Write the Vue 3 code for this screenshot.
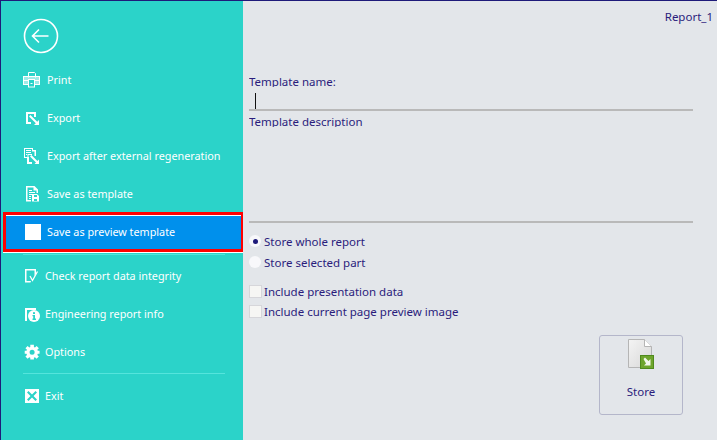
<script setup>
const topItems = [
  { label: 'Print', icon: 'print' },
  { label: 'Export', icon: 'export' },
  { label: 'Export after external regeneration', icon: 'regen' },
  { label: 'Save as template', icon: 'template' },
]
const lowerItems = [
  { label: 'Check report data integrity', icon: 'check' },
  { label: 'Engineering report info', icon: 'info' },
  { label: 'Options', icon: 'gear' },
]
</script>

<template>
  <div class="window">
    <aside class="sidebar">
      <div class="back-wrap">
        <svg class="back" width="36" height="36" viewBox="0 0 36 36" fill="none" stroke="#fff">
          <circle cx="18" cy="18" r="16.5" stroke-width="1.6" />
          <path d="M9.5 18H25.5M16 11.5L9.5 18L16 24.5" stroke-width="1.6" />
        </svg>
      </div>
      <ul class="menu">
        <li v-for="item in topItems" :key="item.label" class="item">
          <svg class="icon" width="18" height="18" viewBox="0 0 18 18">
            <g v-if="item.icon === 'print'" fill="none" stroke="#fff" stroke-width="1">
              <path d="M5.5 6.5V1.5H11.5L12.5 2.5V6.5" />
              <rect x="0.5" y="5.5" width="16" height="8" fill="#fff" fill-opacity="0.55" />
              <path d="M0.5 9.5H16.5" />
              <rect x="5.5" y="8.5" width="6" height="7.5" fill="#2bd3c9" />
              <path d="M7.5 12.5H9.5" />
            </g>
            <g v-else-if="item.icon === 'export'" fill="#fff">
              <path d="M3 3H13V8H11V5H5V13H8V15H3Z" />
              <path d="M6 7.4L7.4 6L14.2 12.8L16 11V16H11L12.8 14.2Z" />
            </g>
            <g v-else-if="item.icon === 'regen'" fill="#fff">
              <path fill-rule="evenodd" d="M1 1H10V3H13V9H11.5V4.5H9V8H5.5V11H1ZM2 2V10H4.5V7H9V2ZM3 3H8V4H3ZM3 5H8V6H3ZM3 7H4V8H3Z" />
              <path d="M4 10H6V15H9V17H4Z" />
              <path d="M7 9.4L8.4 8L14.4 14L16 12.5V17H11.5L13 15.4Z" />
            </g>
            <g v-else-if="item.icon === 'template'" fill="#fff">
              <path fill-rule="evenodd" d="M3 1H11.5L15 4.5V8H13.5V5.5H10.5V2.5H4.5V15H8V16.5H3ZM6 5H9V6H6ZM6 7H12V8H6ZM6 9H9V10H6ZM6 11H8V12H6ZM6 13H8V14H6Z" />
              <path fill-rule="evenodd" d="M9 9H14L16 11V16.5H9ZM11 10V12H14V10ZM11 14V16H14V14Z" />
            </g>
          </svg>
          <span class="label">{{ item.label }}</span>
        </li>
        <li class="item selected">
          <span class="white-square"></span>
          <span class="label">Save as preview template</span>
        </li>
      </ul>
      <div class="divider first"></div>
      <ul class="menu lower">
        <li v-for="item in lowerItems" :key="item.label" class="item">
          <svg class="icon" width="18" height="18" viewBox="0 0 18 18">
            <g v-if="item.icon === 'check'" fill="#fff">
              <path d="M2 2H13V7L11.5 9V3.5H3.5V14H8L7.5 15.5H2Z" />
              <path fill="none" stroke="#fff" stroke-width="1.3" d="M7 9L9.5 13.5L14.5 4.5" />
            </g>
            <g v-else-if="item.icon === 'info'">
              <path fill="#fff" d="M2 3H13V5H4V16H2Z" />
              <circle cx="11" cy="11" r="6" fill="#fff" />
              <rect x="10" y="7.2" width="2" height="1.8" fill="#2bd3c9" />
              <path fill="#2bd3c9" d="M9.5 10H12V13.5H13V15H9.5V13.5H10.2V11.3H9.5Z" />
            </g>
            <g v-else-if="item.icon === 'gear'">
              <path fill="#fff" fill-rule="evenodd" d="M7 1H11V3.4L12.2 3.9L14 2.3L16.5 4.7L14.8 6.4L15.3 7.5H17.3V11H15.3L14.8 12.2L16.5 14L14 16.4L12.2 14.8L11 15.3V17.3H7V15.3L5.9 14.8L4 16.4L1.6 14L3.3 12.2L2.8 11H0.8V7.5H2.8L3.3 6.4L1.6 4.7L4 2.3L5.9 3.9L7 3.4ZM9 6.4A2.8 2.8 0 1 0 9 12A2.8 2.8 0 1 0 9 6.4Z" transform="translate(1 0.9) scale(.9)" />
            </g>
          </svg>
          <span class="label">{{ item.label }}</span>
        </li>
      </ul>
      <div class="divider second"></div>
      <div class="item exit">
        <svg class="icon" width="18" height="18" viewBox="0 0 18 18">
          <path fill="#fff" fill-rule="evenodd" d="M2 2H16V16H2ZM5.5 4L4 5.5L7.5 9L4 12.5L5.5 14L9 10.5L12.5 14L14 12.5L10.5 9L14 5.5L12.5 4L9 7.5Z" />
        </svg>
        <span class="label">Exit</span>
      </div>
    </aside>

    <main class="content">
      <div class="report-name">Report_1</div>
      <div class="form">
        <label class="clipped name-label">Template name:</label>
        <div class="name-input"><span class="caret"></span></div>
        <label class="clipped desc-label">Template description</label>
        <div class="desc-input"></div>
        <div class="radios">
          <div class="option">
            <span class="radio checked"></span>
            <span>Store whole report</span>
          </div>
          <div class="option">
            <span class="radio"></span>
            <span>Store selected part</span>
          </div>
        </div>
        <div class="checks">
          <div class="option">
            <span class="checkbox"></span>
            <span>Include presentation data</span>
          </div>
          <div class="option">
            <span class="checkbox"></span>
            <span>Include current page preview image</span>
          </div>
        </div>
      </div>
      <div class="store-row">
        <button class="store" type="button">
          <svg width="32" height="34" viewBox="0 1 32 34">
            <defs>
              <linearGradient id="sheet" x1="0" y1="0" x2="1" y2="1">
                <stop offset="0" stop-color="#f4f4f4" />
                <stop offset="1" stop-color="#d8d8d8" />
              </linearGradient>
            </defs>
            <path d="M3.5 1.5H19.5L26.5 8.5V29.5H3.5Z" fill="url(#sheet)" stroke="#b5b5b5" />
            <path d="M19.5 1.5V8.5H26.5" fill="#fff" stroke="#b5b5b5" />
            <rect x="15.5" y="17.5" width="13" height="13" fill="#6ea52c" stroke="#4f8a1c" />
            <path d="M18.5 21L20 19.5L23.5 23L25.5 21V27.5H19L21 25.5Z" fill="#f2f7ea" />
          </svg>
          <span>Store</span>
        </button>
      </div>
    </main>
  </div>
</template>

<style>
html, body {
  margin: 0;
  padding: 0;
  background: #e3e6ea;
}
</style>

<style scoped>
.window {
  width: 717px;
  height: 440px;
  box-sizing: border-box;
  display: flex;
  border-top: 1px solid #1e1a7a;
  border-left: 1px solid #1e1a7a;
  font-family: "Noto Sans", "Open Sans", sans-serif;
  font-size: 11.5px;
  overflow: hidden;
}
.sidebar {
  width: 242px;
  flex: none;
  background: #2bd3c9;
  color: #fff;
  font-size: 10.8px;
  display: flex;
  flex-direction: column;
}
.back-wrap {
  height: 60px;
  padding: 17px 0 0 22px;
  box-sizing: border-box;
}
.back {
  display: block;
}
.menu {
  list-style: none;
  margin: 0;
  padding: 0;
}
.item {
  height: 38px;
  display: flex;
  align-items: center;
  padding-left: 22px;
  box-sizing: border-box;
}
.icon {
  flex: none;
  margin-right: 6px;
}
.label {
  white-space: nowrap;
  padding-bottom: 2px;
}
.selected {
  height: 40px;
  margin: -1px 0 0 2px;
  padding-left: 19px;
  background: #0090ec;
  border: 3px solid #ff0000;
  border-right-width: 2px;
  box-shadow: inset 0 1px 0 #fff, 0 1px 0 #fff;
}
.white-square {
  width: 16px;
  height: 16px;
  background: #fff;
  margin-right: 6px;
  flex: none;
}
.divider {
  height: 1px;
  background: #55e4dc;
  margin: 0 18px 0 22px;
}
.divider.first {
  margin-top: 2px;
}
.divider.second {
  margin-top: 2px;
}
.lower {
  margin-top: 2px;
}
.lower .icon,
.exit .icon {
  margin-right: 4px;
}
.exit {
  margin-top: 3px;
}
.content {
  flex: 1;
  padding: 0 24px 0 6px;
  color: #2a1c7c;
  display: flex;
  flex-direction: column;
}
.report-name {
  text-align: right;
  margin: 8px -20px 0 0;
  line-height: 16px;
}
.form {
  margin-top: 50px;
  display: flex;
  flex-direction: column;
}
.clipped {
  display: block;
  overflow: hidden;
  line-height: 14px;
}
.name-label {
  height: 12px;
}
.name-input {
  height: 22px;
  border-bottom: 2px solid #b9b9b9;
}
.caret {
  display: block;
  width: 1px;
  height: 16px;
  margin: 6px 0 0 6px;
  background: #111;
}
.caret {
  margin-top: 6px;
}
.desc-label {
  height: 12px;
  margin-top: 4px;
}
.desc-input {
  height: 94px;
  border-bottom: 2px solid #b9b9b9;
}
.radios {
  margin-top: 10px;
  display: flex;
  flex-direction: column;
  gap: 5px;
}
.checks {
  margin-top: 13px;
  display: flex;
  flex-direction: column;
  gap: 4px;
}
.option {
  height: 16px;
  display: flex;
  align-items: center;
}
.radio {
  width: 12px;
  height: 12px;
  border-radius: 50%;
  background: #f8f8fb;
  margin: 0 3px 0 0;
  position: relative;
  flex: none;
}
.radio.checked::after {
  content: "";
  position: absolute;
  left: 3.5px;
  top: 3.5px;
  width: 5px;
  height: 5px;
  border-radius: 50%;
  background: #1e1a7a;
}
.checkbox {
  width: 11px;
  height: 11px;
  background: #f6f6f4;
  border: 1px solid #d6d6da;
  margin-right: 2px;
  flex: none;
}
.store-row {
  display: flex;
  justify-content: flex-end;
  margin: 16px 10px 0 0;
}
.store {
  width: 84px;
  height: 80px;
  box-sizing: border-box;
  background: transparent;
  border: 1px solid #b4b6ca;
  border-radius: 3px;
  color: #2a1c7c;
  font: inherit;
  display: flex;
  flex-direction: column;
  align-items: center;
  padding: 3px 0 0;
  gap: 11px;
}
.store svg {
  display: block;
}
</style>
